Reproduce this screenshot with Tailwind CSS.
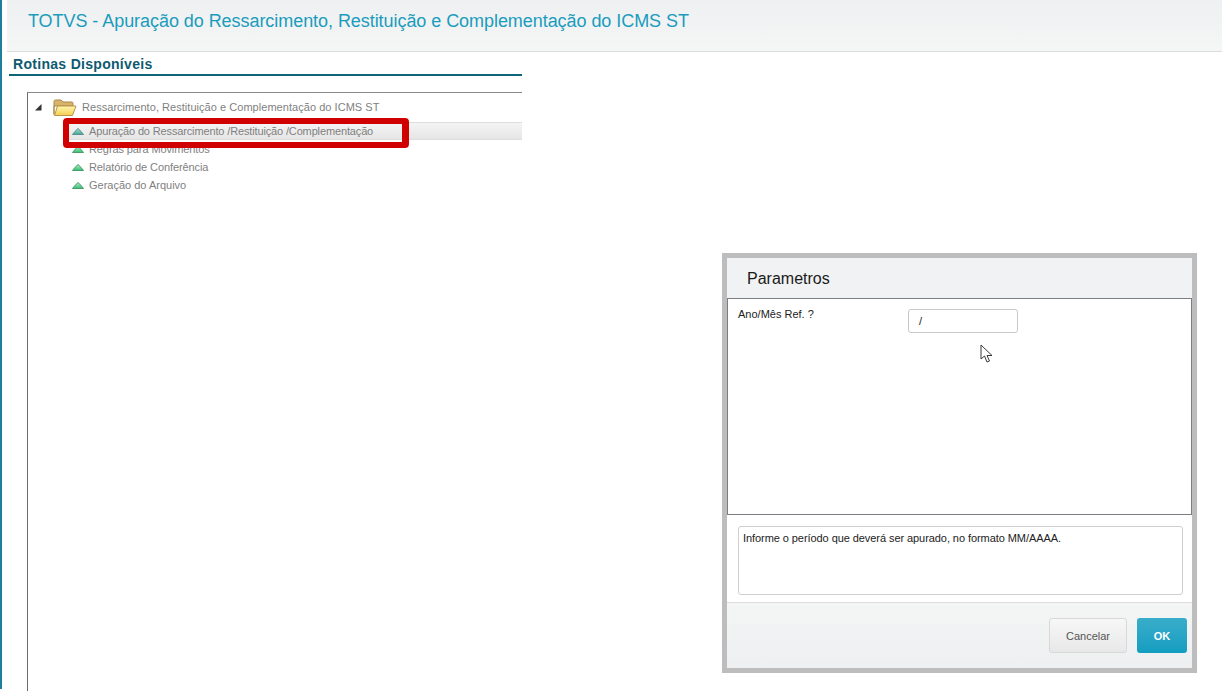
<!DOCTYPE html>
<html lang="en">

<head>
    <meta charset="UTF-8">
    <title>TOTVS</title>
    <script src="https://cdn.jsdelivr.net/npm/@tailwindcss/browser@4"></script>
</head>

<body class="relative bg-white w-[1222px] h-[691px] overflow-hidden font-['Liberation_Sans',Arial,sans-serif] flex">
    <div class="w-[2px] h-[689px] bg-[#1d7f9c] shrink-0"></div>

    <div class="flex-1 flex flex-col min-w-0 h-full">
        <!-- header -->
        <div class="ml-[5px] h-[52px] shrink-0 bg-gradient-to-b from-[#eef0f1] to-[#f5f6f6] border-b border-[#dcdcdc] pl-[21px] pt-[9px]">
            <h1 class="text-[18px] leading-[24px] tracking-[-0.055px] text-[#1a9cbd] whitespace-nowrap">TOTVS - Apuração do Ressarcimento, Restituição e Complementação do ICMS ST</h1>
        </div>

        <!-- rotinas -->
        <div class="w-[513px] ml-[7px] flex-1 flex flex-col min-h-0">
            <div class="h-[24px] shrink-0 border-b-2 border-[#0e6478] pl-[4px] pt-[3px] text-[14px] leading-[18px] font-bold tracking-[0.3px] text-[#0e5a70]">Rotinas Disponíveis</div>

            <div class="ml-[18px] mt-[16px] flex-1 border-l border-t border-l-[#6f6f6f] border-t-[#8a8a8a] text-[11px] text-[#7f7f7f]">
                <div class="h-[29px] flex items-center">
                    <svg class="ml-[7px]" width="7" height="7" viewBox="0 0 7 7"><path d="M0 6.500L6.500 6.500L6.500 0Z" fill="#333" /></svg>
                    <svg class="ml-[11px]" width="24" height="19" viewBox="0 0 24 19">
                        <defs>
                            <linearGradient id="folder" x1="0" y1="0" x2="0" y2="1">
                                <stop offset="0" stop-color="#fff6b0" />
                                <stop offset="1" stop-color="#f5cf50" />
                            </linearGradient>
                            <linearGradient id="leaf" x1="0" y1="0" x2="0" y2="1">
                                <stop offset="0" stop-color="#b4ecc8" />
                                <stop offset="1" stop-color="#30c070" />
                            </linearGradient>
                            <linearGradient id="leaf-sel" x1="0" y1="0" x2="0" y2="1">
                                <stop offset="0" stop-color="#b0dcd0" />
                                <stop offset="1" stop-color="#3fa890" />
                            </linearGradient>
                        </defs>
                        <path d="M1 16.500V3.500Q1 2 2.500 2H8L10 4H19Q20 4 20 5.500V8H1Z" fill="#d9b36a" stroke="#a8894a" stroke-width="1" />
                        <path d="M1.500 17.500L4.500 8H23L19.500 17.500Z" fill="url(#folder)" stroke="#b8954a" stroke-width="1" />
                    </svg>
                    <span class="ml-[5px] whitespace-nowrap tracking-[0.04px]">Ressarcimento, Restituição e Complementação do ICMS ST</span>
                </div>
                <div class="h-[18px] ml-[41px] flex items-center bg-gradient-to-b from-[#f4f4f4] to-[#e6e6e6] border-y border-[#dddddd]">
                    <svg class="ml-[3px]" width="12" height="7" viewBox="0 0 12 7"><path d="M0.500 6.500Q3 3 6 0.500Q9 3 11.500 6.500Z" fill="url(#leaf-sel)" stroke="#5a8f90" stroke-width="1" /></svg>
                    <span class="ml-[5px] pt-[1px] whitespace-nowrap tracking-[-0.14px]">Apuração do Ressarcimento /Restituição /Complementação</span>
                </div>
                <div class="h-[18px] ml-[44px] flex items-center">
                    <svg width="12" height="7" viewBox="0 0 12 7"><path d="M0.500 6.500Q3 3 6 0.500Q9 3 11.500 6.500Z" fill="url(#leaf)" stroke="#4a9a6a" stroke-width="1" /></svg>
                    <span class="ml-[5px] pt-[1px] whitespace-nowrap tracking-[-0.1px]">Regras para Movimentos</span>
                </div>
                <div class="h-[18px] ml-[44px] flex items-center">
                    <svg width="12" height="7" viewBox="0 0 12 7"><path d="M0.500 6.500Q3 3 6 0.500Q9 3 11.500 6.500Z" fill="url(#leaf)" stroke="#4a9a6a" stroke-width="1" /></svg>
                    <span class="ml-[5px] pt-[1px] whitespace-nowrap tracking-[-0.1px]">Relatório de Conferência</span>
                </div>
                <div class="h-[18px] ml-[44px] flex items-center">
                    <svg width="12" height="7" viewBox="0 0 12 7"><path d="M0.500 6.500Q3 3 6 0.500Q9 3 11.500 6.500Z" fill="url(#leaf)" stroke="#4a9a6a" stroke-width="1" /></svg>
                    <span class="ml-[5px] pt-[1px] whitespace-nowrap">Geração do Arquivo</span>
                </div>
            </div>
        </div>
    </div>

    <!-- red highlight -->
    <div class="absolute left-[63px] top-[118px] w-[346px] h-[30px] border-[6px] border-r-[7px] border-[#d00000] rounded-[4px]"></div>

    <!-- modal -->
    <div class="absolute left-[722px] top-[253px] w-[475px] h-[420px] border-[5px] border-[#bdbdbd] bg-[#f1f2f3] flex flex-col">
        <div class="h-[40px] shrink-0 pl-[20px] pt-[11px] text-[16px] leading-[20px] text-[#1a1a1a]">Parametros</div>
        <div class="h-[217px] shrink-0 bg-white border border-[#7b7f83] flex items-start relative">
            <span class="ml-[10px] mt-[8px] text-[11px] leading-[14px] text-[#222] w-[170px]">Ano/Mês Ref. ?</span>
            <div class="mt-[10px] w-[110px] h-[24px] border border-[#c8c8c8] rounded-[3px] pl-[10px] text-[11px] leading-[22px] text-[#222]">/</div>
            <svg class="absolute left-[252px] top-[45px]" width="13" height="19" viewBox="0 0 13 19">
                <path d="M1 1V15L4.500 12L7 18L9.500 17L7 11.500H12Z" fill="#fff" stroke="#3a3a3a" stroke-width="1" />
            </svg>
        </div>
        <div class="h-[88px] shrink-0 bg-white border-b border-[#dcdcdc] pl-[11px] pr-[9px] pt-[11px]">
            <div class="h-[69px] border border-[#cfcfcf] rounded-[3px] pl-[4px] pt-[4px] text-[11px] leading-[14px] tracking-[-0.07px] text-[#222]">Informe o período que deverá ser apurado, no formato MM/AAAA.</div>
        </div>
        <div class="flex-1 flex justify-end items-start gap-[10px] pt-[15px] pr-[5px] bg-gradient-to-b from-[#f4f5f5] to-[#eeeff0]">
            <div class="w-[78px] h-[35px] pt-[1px] flex items-center justify-center border border-[#d8d8d8] rounded-[3px] bg-gradient-to-b from-[#f7f7f7] to-[#e8e8e8] text-[11px] text-[#555]">Cancelar</div>
            <div class="w-[50px] h-[35px] pt-[1px] flex items-center justify-center rounded-[3px] bg-gradient-to-b from-[#38adcb] to-[#129dc0] text-[11px] font-bold text-white">OK</div>
        </div>
    </div>
</body>

</html>
